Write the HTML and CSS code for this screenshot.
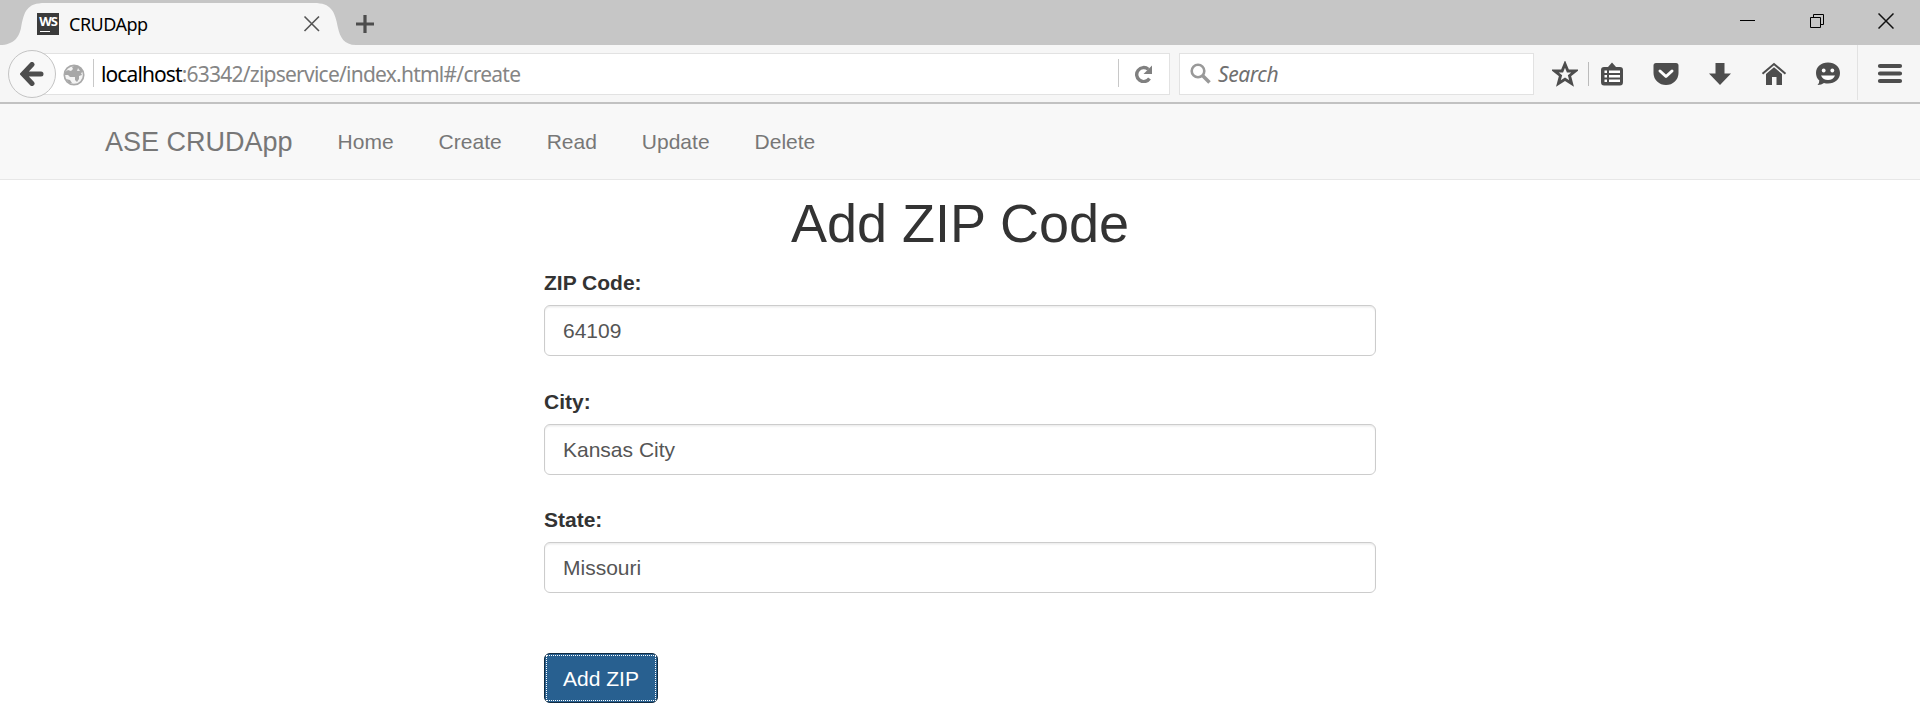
FILE: index.html
```html
<!DOCTYPE html>
<html lang="en">
<head>
<meta charset="utf-8">
<title>CRUDApp</title>
<link rel="stylesheet" href="styles.css">
</head>
<body>
<div class="tabstrip">
  <svg class="tab-shape" width="360" height="45" viewBox="0 0 360 45"><path d="M0 45C14 45 19 37 21 28C24 11 27 3 45 3H314C331 3 335 11 338 28C340 37 344 45 356 45Z" fill="#f6f6f6"/></svg>
  <div class="tab">
    <div class="favicon">WS</div>
    <span class="tab-title">CRUDApp</span>
    <svg class="tab-close" width="18" height="18" viewBox="0 0 18 18"><path d="M1.500 1.500L16 16M16 1.500L1.500 16" stroke="#555" stroke-width="1.600" fill="none"/></svg>
  </div>
  <svg class="new-tab" width="18" height="18" viewBox="0 0 18 18"><path d="M9 0V18M0 9H18" stroke="#4d4d4d" stroke-width="3.200"/></svg>
  <div class="window-controls">
    <svg width="16" height="16" viewBox="0 0 16 16"><path d="M0 7.500H15" stroke="#000"/></svg>
    <svg width="16" height="16" viewBox="0 0 16 16"><path d="M.5 4.500H10.500V14.500H.5ZM3.500 4V1.500H13.500V11.500H11" stroke="#000" fill="none"/></svg>
    <svg width="16" height="16" viewBox="0 0 16 16"><path d="M.5 .5L15.500 15.500M15.500 .5L.5 15.500" stroke="#111" stroke-width="1.500"/></svg>
  </div>
</div>
<div class="toolbar">
  <div class="back"><svg width="24" height="24" viewBox="0 0 24 24"><path d="M21 12H3.500M12 2.500L3 12L12 21.500" stroke="#4d4d4d" stroke-width="5" stroke-linecap="round" stroke-linejoin="miter" fill="none"/></svg></div>
  <div class="urlbar">
    <svg class="globe" width="22" height="22" viewBox="0 0 22 22"><circle cx="11" cy="11" r="9.700" fill="#f4f4f4" stroke="#aaa" stroke-width="1.700"/><path d="M2 8L5 6L8 7L10 5L9 3L13 1L18 4L20 8L18 9L19 11L16 12L16 15L14 18L12 16L12 13L7 13L5 11L2 11ZM3 15L7 16L9 19L6 19Z" fill="#a7a7a7"/><path d="M15 4L17 7L14 7Z" fill="#e8e8e8"/></svg>
    <div class="url"><span class="host">localhost</span><span class="path">:63342/zipservice/index.html#/create</span></div>
    <div class="reload"><svg width="18" height="18" viewBox="0 0 18 18"><path d="M14.500 13.500A7 7 0 1 1 13.300 4.300" stroke="#808080" stroke-width="3.400" fill="none"/><path d="M17 .5V9H8.500Z" fill="#808080"/></svg></div>
  </div>
  <div class="search">
    <svg width="22" height="22" viewBox="0 0 22 22"><circle cx="8" cy="8" r="6.300" stroke="#999" stroke-width="2.600" fill="none"/><path d="M12.500 12.500L19.500 19.500" stroke="#999" stroke-width="3.600"/></svg>
    <span class="search-text">Search</span>
  </div>
  <div class="actions">
    <svg class="star" width="26" height="26" viewBox="0 0 26 26"><path d="M13 3L15.900 10H23.400L17.500 14.700L19.600 22.500L13 18.300L6.400 22.500L8.500 14.700L2.600 10H10.100Z" stroke="#4d4d4d" stroke-width="2.900" fill="none"/></svg>
    <i class="rule"></i>
    <svg class="list" width="22" height="24" viewBox="0 0 22 24"><path d="M3 5H7L11 .5L15 5H19Q22 5 22 8V20Q22 23.500 19 23.500H3Q0 23.500 0 20V8Q0 5 3 5Z" fill="#4d4d4d"/><path d="M3.500 9.700H6M3.500 14.200H6M3.500 18.700H6M8 9.700H19M8 14.200H19M8 18.700H19" stroke="#fff" stroke-width="2.600"/></svg>
    <svg class="pocket" width="26" height="24" viewBox="0 0 26 24"><path d="M3 1H23Q25.500 1 25.500 3.500V11A12.500 12 0 0 1 .5 11V3.500Q.5 1 3 1Z" fill="#4d4d4d"/><path d="M7 9L13 14.500L19 9" stroke="#fff" stroke-width="3" stroke-linecap="round" stroke-linejoin="round" fill="none"/></svg>
    <svg class="down" width="24" height="24" viewBox="0 0 24 24"><path d="M7.500 1H16.500V11.500H23L12 23L1 11.500H7.500Z" fill="#4d4d4d"/></svg>
    <svg class="home" width="26" height="24" viewBox="0 0 26 24"><path d="M1.500 11.800L13 2L24.500 11.800" stroke="#4d4d4d" stroke-width="2" fill="none"/><path d="M5 12L13 5.300L21 12V23H15.500V15H11V23H5Z" fill="#4d4d4d"/></svg>
    <svg class="smile" width="26" height="24" viewBox="0 0 26 24"><path d="M13 .5C20 .5 25 5 25 11C25 17 20 21.500 13 21.500Q11 21.500 9 21Q6.500 23 2.500 23Q4.500 21 4.300 18.500Q1 15.500 1 11C1 5 6 .5 13 .5Z" fill="#4d4d4d"/><circle cx="8.700" cy="8.500" r="1.900" fill="#fff"/><circle cx="17.300" cy="8.500" r="1.900" fill="#fff"/><path d="M6 13.500H20Q18 18 13 18T6 13.500Z" fill="#fff"/></svg>
  </div>
  <div class="menu"><svg width="26" height="22" viewBox="0 0 26 22"><path d="M3 3H23M3 10.500H23M3 18H23" stroke="#4d4d4d" stroke-width="4.200" stroke-linecap="round"/></svg></div>
</div>
<nav class="navbar">
  <a class="brand">ASE CRUDApp</a>
  <a class="link">Home</a><a class="link">Create</a><a class="link">Read</a><a class="link">Update</a><a class="link">Delete</a>
</nav>
<main class="page">
  <h1 class="title">Add ZIP Code</h1>
  <form class="form">
    <div class="group"><label class="label" for="zip">ZIP Code:</label><input class="field" id="zip" value="64109"></div>
    <div class="group"><label class="label" for="city">City:</label><input class="field" id="city" value="Kansas City"></div>
    <div class="group"><label class="label" for="state">State:</label><input class="field" id="state" value="Missouri"></div>
    <button class="submit" type="button"><span class="submit-focus">Add ZIP</span></button>
  </form>
</main>
</body>
</html>
```
FILE: styles.css
```css
* { box-sizing: border-box; }
body { margin: 0; height: 723px; overflow: hidden; background: #fff; color: #333; font: 21px/30px "Liberation Sans", Arial, sans-serif; }
svg { display: block; flex: none; }

.tabstrip { position: relative; display: flex; height: 45px; background: #c6c6c6; font-family: "Noto Sans", sans-serif; }
.tab-shape { position: absolute; left: 0; top: 0; }
.tab { position: relative; display: flex; width: 337px; height: 45px; padding-left: 37px; }
.favicon { position: relative; width: 22px; height: 22px; margin-top: 13px; background: #3b3b3b; color: #fff; font: bold 13px/17px "Open Sans", sans-serif; letter-spacing: -1px; text-align: center; }
.favicon::after { content: ""; position: absolute; left: 3px; bottom: 3px; width: 10px; height: 1px; background: #fff; }
.tab-title { margin: 9px 0 0 10px; width: 234px; color: #000; font-size: 18px; line-height: 30px; letter-spacing: -0.5px; }
.tab-close { margin-top: 15px; }
.new-tab { position: relative; margin: 15px 0 0 19px; }
.window-controls { display: flex; gap: 54px; margin: 13px 26px 0 auto; }
.window-controls svg:last-child { margin-left: -2px; }

.toolbar { display: flex; height: 59px; padding-top: 8px; background: #f6f6f6; border-bottom: 2px solid #c2c2c2; font-family: "Noto Sans", sans-serif; }
.back { position: relative; z-index: 1; display: flex; align-items: center; justify-content: center; flex: none; width: 48px; height: 48px; margin: -3px 0 0 8px; border: 1px solid #c4c4c4; border-radius: 50%; background: #f8f8f8; }
.urlbar { display: flex; flex: none; width: 1130px; height: 42px; margin-left: -16px; padding-left: 22px; background: #fff; border: 1px solid #e2e2e2; }
.globe { margin-top: 10px; }
.url { margin: 5px 0 0 8px; height: 28px; padding-left: 7px; border-left: 1px solid #c8c8c8; line-height: 31px; font-size: 21px; white-space: nowrap; }
.host { color: #000; letter-spacing: -0.9px; }
.path { color: #858585; letter-spacing: -0.76px; }
.reload { margin: 5px 0 0 auto; width: 51px; height: 28px; padding: 6px 0 0 16px; border-left: 1px solid #c8c8c8; }
.search { display: flex; flex: none; width: 355px; height: 42px; margin-left: 9px; padding: 9px 0 0 10px; background: #fff; border: 1px solid #e2e2e2; }
.search-text { margin: -4px 0 0 6px; color: #707070; font-size: 21px; font-style: italic; line-height: 31px; letter-spacing: -0.4px; }
.actions { display: flex; align-items: flex-start; margin-left: 18px; padding-top: 9px; }
.star { margin-top: -1px; }
.rule { width: 1px; height: 24px; margin-left: 10px; background: #bbb; }
.list { margin-left: 12px; }
.pocket { margin-left: 30px; }
.down { margin-left: 29px; }
.home { margin-left: 29px; }
.smile { margin-left: 28px; }
.menu { width: 63px; height: 55px; margin: -8px 0 0 auto; padding: 18px 0 0 19px; border-left: 1px solid #e2e2e2; }

.navbar { display: flex; height: 76px; padding-left: 105px; background: #f8f8f8; border-bottom: 1px solid #e7e7e7; color: #777; line-height: 76px; }
.brand { margin-right: 45px; font-size: 27px; }
.link { margin-right: 45px; line-height: 75px; }

.page { width: 832px; margin: 0 auto; }
.title { margin: 14px 0 16px; font-size: 54px; font-weight: 500; line-height: 58px; text-align: center; }
.form { display: flex; flex-direction: column; align-items: flex-start; }
.group { width: 100%; height: 119px; }
.group:nth-child(2) { height: 118px; }
.label { display: block; margin: 0 0 7px; font-weight: bold; }
.field { display: block; width: 100%; height: 51px; padding: 0 18px; border: 1px solid #ccc; border-radius: 6px; background: #fff; box-shadow: inset 0 1.500px 1.500px rgba(0,0,0,.075); color: #555; font: inherit; }
.submit { width: 114px; height: 50px; margin-top: 29px; padding: 1px; border: 1px solid #122b40; border-radius: 6px; background: #286090; color: #fff; font: inherit; }
.submit-focus { display: block; height: 46px; border: 1px dotted #fff; line-height: 45px; }
```
